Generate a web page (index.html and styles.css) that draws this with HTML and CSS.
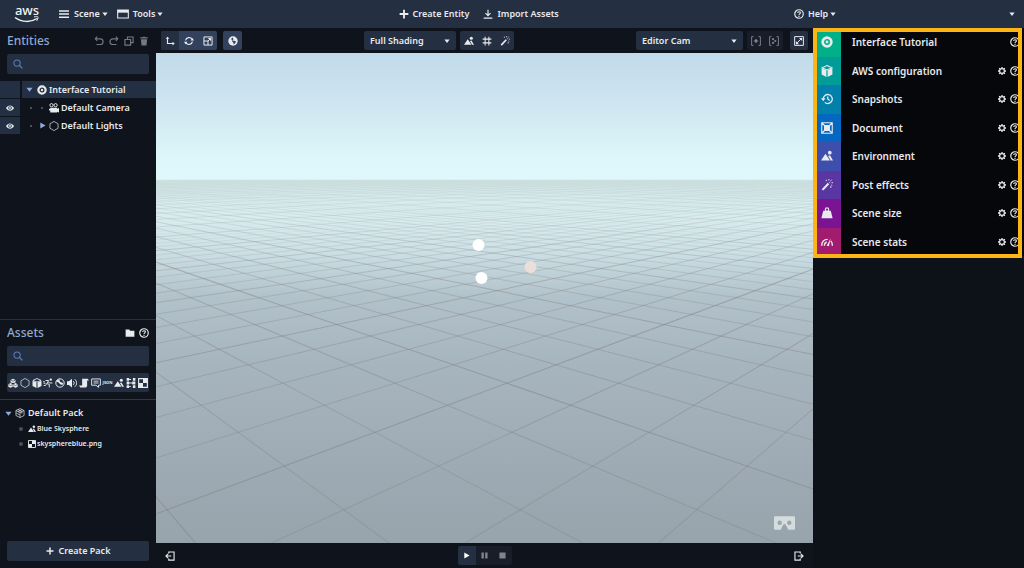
FILE: index.html
```html
<!DOCTYPE html>
<html lang="en">
<head>
    <meta charset="UTF-8">
    <meta name="viewport" content="width=device-width, initial-scale=1.0">
    <title>Scene Editor</title>
    <link rel="stylesheet" href="styles.css">
</head>
<body>
    <!-- Icon set -->
    <svg class="sprite" aria-hidden="true">
        <symbol id="i-menu" viewBox="0 0 16 16"><path d="M0 3h16M0 8h16M0 13h16" fill="none" stroke="currentColor" stroke-width="2.400"/></symbol>
        <symbol id="i-window" viewBox="0 0 18 14"><path d="M1 1h16v12H1z" fill="none" stroke="currentColor" stroke-width="1.600"/><path d="M1 1h16v4H1z"/></symbol>
        <symbol id="i-caret" viewBox="0 0 16 16"><path d="M1 4h14L8 13z"/></symbol>
        <symbol id="i-right" viewBox="0 0 16 16"><path d="M3 1v14l12-7z"/></symbol>
        <symbol id="i-plus" viewBox="0 0 16 16"><path d="M8 1v14M1 8h14" fill="none" stroke="currentColor" stroke-width="3"/></symbol>
        <symbol id="i-import" viewBox="0 0 16 16"><path d="M8 1v9M4 6.500l4 4 4-4M1 14.500h14" fill="none" stroke="currentColor" stroke-width="1.900"/></symbol>
        <symbol id="i-help" viewBox="0 0 16 16"><circle cx="8" cy="8" r="6.800" fill="none" stroke="currentColor" stroke-width="1.900"/><path d="M5.800 6.500c0-3 4.600-2.800 4.400-.2C10 7.800 8 7.800 8 9.700M8 10.800v1.800" fill="none" stroke="currentColor" stroke-width="1.700"/></symbol>
        <symbol id="i-undo" viewBox="0 0 16 16"><path d="M5 1L2 4.500 5 8M2 4.500h8a4.500 4.500 0 0 1 0 9H4" fill="none" stroke="currentColor" stroke-width="1.800"/></symbol>
        <symbol id="i-redo" viewBox="0 0 16 16"><path d="M11 1l3 3.500L11 8M14 4.500H6a4.500 4.500 0 0 0 0 9h6" fill="none" stroke="currentColor" stroke-width="1.800"/></symbol>
        <symbol id="i-copy" viewBox="0 0 16 16"><path d="M1.500 5.500h9v9h-9zM5.500 5V1.500h9v9H11" fill="none" stroke="currentColor" stroke-width="1.800"/></symbol>
        <symbol id="i-trash" viewBox="0 0 16 16"><path d="M2 2h4V1h4v1h4v2H2zM3 5h10l-1 10H4z"/></symbol>
        <symbol id="i-search" viewBox="0 0 16 16"><circle cx="6.500" cy="6.500" r="5" fill="none" stroke="currentColor" stroke-width="1.700"/><path d="M10 10l5 5" stroke="currentColor" stroke-width="2.200"/></symbol>
        <symbol id="i-target" viewBox="0 0 16 16"><circle cx="8" cy="8" r="5.800" fill="none" stroke="currentColor" stroke-width="3.600"/><circle cx="8" cy="8" r="1.900"/></symbol>
        <symbol id="i-eye" viewBox="0 0 16 16"><path d="M0 8c4-7 12-7 16 0-4 7-12 7-16 0z"/><circle cx="8" cy="8" r="3.600" fill="#232f42"/><circle cx="8" cy="8" r="1.800"/></symbol>
        <symbol id="i-camera" viewBox="0 0 16 16"><g fill="none" stroke="currentColor" stroke-width="1.500"><circle cx="4" cy="3.500" r="2.600"/><circle cx="10.500" cy="3.500" r="2.600"/></g><path d="M2 7.500h11v1.500l3-1v7l-3-1v1H2zM0 9h2v3H0z"/></symbol>
        <symbol id="i-hex" viewBox="0 0 16 16"><path d="M8 .700l6.500 3.700v7.200L8 15.300l-6.500-3.700V4.400z" fill="none" stroke="currentColor" stroke-width="1.100"/></symbol>
        <symbol id="i-axes" viewBox="0 0 16 16"><path d="M4 2v10h9" fill="none" stroke="currentColor" stroke-width="1.800"/><path d="M1 4.500L4 1l3 3.500zM12 9l3.500 3L12 15z"/></symbol>
        <symbol id="i-rotate" viewBox="0 0 16 16"><path d="M2.500 7A5.600 5.600 0 0 1 13 5.500M13.500 9A5.600 5.600 0 0 1 3 10.500" fill="none" stroke="currentColor" stroke-width="1.900"/><path d="M10.500 7H16l-2.500-4zM5.500 9H0l2.500 4z"/></symbol>
        <symbol id="i-scale" viewBox="0 0 16 16"><path d="M1.500 1.500h13v13h-13zM1.500 8H8v6.500M8 8l4-4M8.500 4H12v3.500" fill="none" stroke="currentColor" stroke-width="1.600"/></symbol>
        <symbol id="i-globe" viewBox="0 0 16 16"><circle cx="8" cy="8" r="7.500"/><path d="M8 2.500L5 4.500 6.500 7 10 7.500 13 9l-2 3-2.500 1.500L9 11 6.500 8.500 8.500 5.500z" fill="#32415c"/></symbol>
        <symbol id="i-terrain" viewBox="0 0 16 16"><path d="M0 14L6 5l6 9zM9.500 8L12 7l4 7h-3z"/><circle cx="11.700" cy="3.500" r="2.500"/></symbol>
        <symbol id="i-grid" viewBox="0 0 16 16"><path d="M5 1v14M11 1v14M1 5h14M1 11h14" fill="none" stroke="currentColor" stroke-width="1.700"/></symbol>
        <symbol id="i-wand" viewBox="0 0 16 16"><path d="M2 14.500L10 6" stroke="currentColor" stroke-width="2.700"/><path d="M7 1v2M10.500 0v2M14 1l-1 1.500M16 5h-2M15 8.500l-1.500-.5M13 12V9.500M11 5l1.500-1" stroke="currentColor" stroke-width="1.200"/></symbol>
        <symbol id="i-focus" viewBox="0 0 16 16"><path d="M4 1H1v14h3M12 1h3v14h-3M8 4.500v7M4.500 8h7" fill="none" stroke="currentColor" stroke-width="1.500"/><circle cx="8" cy="8" r="2.300"/></symbol>
        <symbol id="i-focus2" viewBox="0 0 16 16"><path d="M4 1H1v14h3M12 1h3v14h-3" fill="none" stroke="currentColor" stroke-width="1.500"/><circle cx="6.500" cy="5" r="1.700"/><circle cx="10" cy="8" r="1.700"/><circle cx="6.500" cy="11" r="1.700"/></symbol>
        <symbol id="i-expand" viewBox="0 0 16 16"><path d="M1 1h14v14H1zM5 11l6-6" fill="none" stroke="currentColor" stroke-width="1.600"/><path d="M8 3h5v5zM3 8v5h5z"/></symbol>
        <symbol id="i-folder" viewBox="0 0 16 16"><path d="M1 2.500h6l1 2h7V14H1z"/></symbol>
        <symbol id="i-models" viewBox="0 0 16 16"><path d="M8 1l4 2v4L8 8 4 7V3zM4 8l3.500 2v4L4 15.500.500 14v-4zM12 8l3.500 2v4L12 15.500 8.500 14v-4z"/><path d="M4.500 3.500L8 5l3.500-1.500M1 10.500L4 12l3-1.500M9 10.500l3 1.500 3-1.500" fill="none" stroke="#232f42"/></symbol>
        <symbol id="i-cube" viewBox="0 0 16 16"><path d="M8 .800L14.500 3.800 8 6.500 1.500 3.800z" fill="none" stroke="currentColor" stroke-width="1.400"/><path d="M.800 4.200L7.200 7v9L.800 12.800zM15.200 4.200L8.800 7v9l6.400-3.200z"/></symbol>
        <symbol id="i-run" viewBox="0 0 16 16"><circle cx="12.500" cy="2.500" r="1.900"/><path d="M4 4h5L6 9l4 1v5M8 6l3 2h4M6 9l-2 3H1M0 6h3M1 8.500h3" fill="none" stroke="currentColor" stroke-width="1.500"/></symbol>
        <symbol id="i-material" viewBox="0 0 16 16"><circle cx="8" cy="8" r="6.700" fill="none" stroke="currentColor" stroke-width="1.600"/><path d="M3 4l4-2 1 4 5 2-1 3-4-1-2-3-4-1z"/></symbol>
        <symbol id="i-sound" viewBox="0 0 16 16"><path d="M0 5h3l5-4v14l-5-4H0z"/><path d="M10 5c2 2 2 4 0 6M12.500 2c4 4 4 8 0 12" fill="none" stroke="currentColor" stroke-width="1.500"/></symbol>
        <symbol id="i-script" viewBox="0 0 16 16"><path d="M5 1h9l2 3h-3v9l-2 2H2l-2-3h5z"/></symbol>
        <symbol id="i-speech" viewBox="0 0 16 16"><path d="M1 1.500h14v10h-3V15l-4-3.500H1zM4 5h8M4 8h8" fill="none" stroke="currentColor" stroke-width="1.500"/></symbol>
        <symbol id="i-state" viewBox="0 0 16 16"><path d="M1 0h4v4.500H1zM1 5.700h4v4.500H1zM1 11.500h4V16H1zM11 0h4v4.500h-4zM10 5.700h5v4.500h-5zM11 11.500h4V16h-4zM5 1.500h3v1.500H5zM5 7.200h5v1.500H5zM5 13h3v1.500H5z"/></symbol>
        <symbol id="i-texture" viewBox="0 0 16 16"><path d="M1 1h14v14H1z" fill="none" stroke="currentColor" stroke-width="1.800"/><path d="M8 1h7v7H8zM1 8h7v7H1z"/></symbol>
        <symbol id="i-pack" viewBox="0 0 16 16"><path d="M8 1l6.500 3v8L8 15.300 1.500 12V4zM1.500 4L8 7.500 14.500 4M8 7.500V15M4.500 2.500L11 6v3M11.500 2.500L5 6M2 8l5.500 3" fill="none" stroke="currentColor" stroke-width="1.100"/></symbol>
        <symbol id="i-exit-left" viewBox="0 0 16 16"><path d="M6 4V1.500h8.500v13H6V12M1.500 8H10M5 4.500L1.500 8 5 11.500" fill="none" stroke="currentColor" stroke-width="1.800"/></symbol>
        <symbol id="i-exit-right" viewBox="0 0 16 16"><path d="M10 4V1.500H1.500v13H10V12M6 8h8.500M11 4.500L14.500 8 11 11.500" fill="none" stroke="currentColor" stroke-width="1.800"/></symbol>
        <symbol id="i-pause" viewBox="0 0 16 16"><path d="M1 1h5.500v14H1zM9.500 1H15v14H9.500z"/></symbol>
        <symbol id="i-stop" viewBox="0 0 16 16"><path d="M1 1h14v14H1z"/></symbol>
        <symbol id="i-gear" viewBox="0 0 16 16"><circle cx="8" cy="8" r="4.800" fill="none" stroke="currentColor" stroke-width="2.400"/><path d="M8 0v3M8 13v3M0 8h3M13 8h3M2.300 2.300l2 2M11.700 11.700l2 2M2.300 13.700l2-2M11.700 4.300l2-2" stroke="currentColor" stroke-width="2.600"/></symbol>
        <symbol id="i-history" viewBox="0 0 16 16"><path d="M3 8a6 6 0 1 1 2 4.500M9 4.500V8l2.500 2" fill="none" stroke="currentColor" stroke-width="1.700"/><path d="M0 7h6l-3 4z"/></symbol>
        <symbol id="i-document" viewBox="0 0 16 16"><path d="M1 1h14v14H1zM1 1l4 4M15 1l-4 4M1 15l4-4M15 15l-4-4" fill="none" stroke="currentColor" stroke-width="1.500"/><path d="M4 4h8v8H4z"/></symbol>
        <symbol id="i-weight" viewBox="0 0 16 16"><path d="M3 5h10l2.500 10H.500z"/><circle cx="8" cy="3.500" r="2.300" fill="none" stroke="currentColor" stroke-width="1.500"/></symbol>
        <symbol id="i-gauge" viewBox="0 0 16 16"><path d="M1 13c0-5 3-8.500 8-8.500M13 6.500c1.500 1.500 2.200 3.500 2.200 6.500M4.500 13c0-2.500 1.200-4.300 3-5" fill="none" stroke="currentColor" stroke-width="1.800"/><path d="M7.500 13L13 3l-2.500 10.500z"/></symbol>
        <symbol id="i-vr" viewBox="0 0 22 14"><path fill-rule="evenodd" d="M1 0h20q1 0 1 1v12q0 1-1 1h-6l-2.500-5q-1.500-2-3 0L7 14H1q-1 0-1-1V1q0-1 1-1zM6 4.500a2.300 2.300 0 1 0 .01 0zM16 4.500a2.300 2.300 0 1 0 .01 0z"/></symbol>
    </svg>

    <header class="topbar">
        <nav class="menu">
            <a class="logo" href="#" aria-label="aws">
                <svg viewBox="0 0 26 28">
                    <text x="13" y="15" text-anchor="middle">aws</text>
                    <path d="M1 17.500c7 5 16 5 22 1" fill="none" stroke="currentColor" stroke-width="1.500"/>
                    <path d="M20 17c3-.8 4.500-.5 4 1s-1 2.500-1.500 3" fill="none" stroke="currentColor"/>
                </svg>
            </a>
            <button type="button" class="menu-btn"><svg class="icon wide"><use href="#i-menu"/></svg>Scene<svg class="icon caret"><use href="#i-caret"/></svg></button>
            <button type="button" class="menu-btn"><svg class="icon wide"><use href="#i-window"/></svg>Tools<svg class="icon caret"><use href="#i-caret"/></svg></button>
        </nav>
        <div class="menu actions">
            <button type="button" class="menu-btn"><svg class="icon"><use href="#i-plus"/></svg>Create Entity</button>
            <button type="button" class="menu-btn"><svg class="icon"><use href="#i-import"/></svg>Import Assets</button>
        </div>
        <div class="menu account">
            <button type="button" class="menu-btn"><svg class="icon"><use href="#i-help"/></svg>Help<svg class="icon caret"><use href="#i-caret"/></svg></button>
            <button type="button" class="menu-btn" aria-label="Account"><svg class="icon caret"><use href="#i-caret"/></svg></button>
        </div>
    </header>

    <main class="editor">
        <aside class="sidebar">
            <section class="entities">
                <div class="panel-head">
                    <h2>Entities</h2>
                    <div class="panel-tools dim">
                        <button type="button" aria-label="Undo"><svg class="icon"><use href="#i-undo"/></svg></button>
                        <button type="button" aria-label="Redo"><svg class="icon"><use href="#i-redo"/></svg></button>
                        <button type="button" aria-label="Duplicate"><svg class="icon"><use href="#i-copy"/></svg></button>
                        <button type="button" aria-label="Delete"><svg class="icon"><use href="#i-trash"/></svg></button>
                    </div>
                </div>
                <label class="search"><svg class="icon"><use href="#i-search"/></svg><input type="search" aria-label="Search entities"></label>
                <ul class="tree">
                    <li class="selected"><span class="eye"></span><div class="node"><svg class="icon arrow"><use href="#i-caret"/></svg><svg class="icon"><use href="#i-target"/></svg>Interface Tutorial</div></li>
                    <li><button type="button" class="eye" aria-label="Toggle camera"><svg class="icon"><use href="#i-eye"/></svg></button><div class="node child"><i class="dot"></i><span class="slot"><i class="dot"></i></span><svg class="icon"><use href="#i-camera"/></svg>Default Camera</div></li>
                    <li><button type="button" class="eye" aria-label="Toggle lights"><svg class="icon"><use href="#i-eye"/></svg></button><div class="node child"><i class="dot"></i><span class="slot"><svg class="icon arrow"><use href="#i-right"/></svg></span><svg class="icon"><use href="#i-hex"/></svg>Default Lights</div></li>
                </ul>
            </section>
            <section class="assets">
                <div class="panel-head">
                    <h2>Assets</h2>
                    <div class="panel-tools">
                        <button type="button" aria-label="New folder"><svg class="icon"><use href="#i-folder"/></svg></button>
                        <button type="button" aria-label="Help"><svg class="icon"><use href="#i-help"/></svg></button>
                    </div>
                </div>
                <label class="search"><svg class="icon"><use href="#i-search"/></svg><input type="search" aria-label="Search assets"></label>
                <div class="filters">
                    <button type="button" aria-label="Models"><svg class="icon"><use href="#i-models"/></svg></button>
                    <button type="button" aria-label="Entities"><svg class="icon"><use href="#i-hex"/></svg></button>
                    <button type="button" aria-label="Meshes"><svg class="icon"><use href="#i-cube"/></svg></button>
                    <button type="button" aria-label="Animations"><svg class="icon"><use href="#i-run"/></svg></button>
                    <button type="button" aria-label="Materials"><svg class="icon"><use href="#i-material"/></svg></button>
                    <button type="button" aria-label="Sounds"><svg class="icon"><use href="#i-sound"/></svg></button>
                    <button type="button" aria-label="Scripts"><svg class="icon"><use href="#i-script"/></svg></button>
                    <button type="button" aria-label="Speech"><svg class="icon"><use href="#i-speech"/></svg></button>
                    <button type="button" class="json">JSON</button>
                    <button type="button" aria-label="Skyboxes"><svg class="icon"><use href="#i-terrain"/></svg></button>
                    <button type="button" aria-label="State machines"><svg class="icon"><use href="#i-state"/></svg></button>
                    <button type="button" aria-label="Textures"><svg class="icon"><use href="#i-texture"/></svg></button>
                </div>
                <ul class="packs">
                    <li class="pack"><svg class="icon arrow"><use href="#i-caret"/></svg><svg class="icon"><use href="#i-pack"/></svg>Default Pack</li>
                    <li class="asset"><i class="bullet"></i><svg class="icon"><use href="#i-terrain"/></svg>Blue Skysphere</li>
                    <li class="asset"><i class="bullet"></i><svg class="icon"><use href="#i-texture"/></svg>skysphereblue.png</li>
                </ul>
                <button type="button" class="create-pack"><svg class="icon"><use href="#i-plus"/></svg>Create Pack</button>
            </section>
        </aside>

        <section class="stage">
            <div class="toolbar">
                <div class="tools left">
                    <div class="group lit">
                        <button type="button" class="active" aria-label="Translate"><svg class="icon"><use href="#i-axes"/></svg></button>
                        <button type="button" aria-label="Rotate"><svg class="icon"><use href="#i-rotate"/></svg></button>
                        <button type="button" aria-label="Scale"><svg class="icon"><use href="#i-scale"/></svg></button>
                    </div>
                    <div class="group lit"><button type="button" aria-label="World space"><svg class="icon"><use href="#i-globe"/></svg></button></div>
                </div>
                <div class="tools">
                    <div class="select shading"><select aria-label="Shading"><option>Full Shading</option></select><svg class="icon caret"><use href="#i-caret"/></svg></div>
                    <div class="group">
                        <button type="button" aria-label="Skybox"><svg class="icon"><use href="#i-terrain"/></svg></button>
                        <button type="button" aria-label="Grid"><svg class="icon"><use href="#i-grid"/></svg></button>
                        <button type="button" aria-label="Post effects"><svg class="icon"><use href="#i-wand"/></svg></button>
                    </div>
                </div>
                <div class="tools">
                    <div class="select cam"><select aria-label="Camera"><option>Editor Cam</option></select><svg class="icon caret"><use href="#i-caret"/></svg></div>
                    <div class="group off">
                        <button type="button" aria-label="Focus"><svg class="icon"><use href="#i-focus"/></svg></button>
                        <button type="button" aria-label="Focus selection"><svg class="icon"><use href="#i-focus2"/></svg></button>
                    </div>
                    <div class="group last"><button type="button" aria-label="Maximize"><svg class="icon"><use href="#i-expand"/></svg></button></div>
                </div>
            </div>
            <div class="viewport">
                <svg class="scene" viewBox="0 0 656 490" preserveAspectRatio="xMidYMid slice">
                    <defs>
                        <linearGradient id="sky" x1="0" y1="0" x2="0" y2="1">
                            <stop offset="0" stop-color="#c1daea"/>
                            <stop offset=".5" stop-color="#d2e9f2"/>
                            <stop offset=".8" stop-color="#dcf6f9"/>
                            <stop offset="1" stop-color="#e0f8fb"/>
                        </linearGradient>
                        <linearGradient id="ground" x1="0" y1="0" x2="0" y2="1">
                            <stop offset="0" stop-color="#d2e8e7"/>
                            <stop offset=".06" stop-color="#daf0f2"/>
                            <stop offset=".12" stop-color="#d8ecef"/>
                            <stop offset=".2" stop-color="#cbdfe4"/>
                            <stop offset=".32" stop-color="#b2c2ca"/>
                            <stop offset=".5" stop-color="#a7b5be"/>
                            <stop offset=".8" stop-color="#9eaab3"/>
                            <stop offset="1" stop-color="#98a4ac"/>
                        </linearGradient>
                        <linearGradient id="haze" x1="0" y1="0" x2="0" y2="1">
                            <stop offset="0" stop-color="#1c1c1c"/>
                            <stop offset=".05" stop-color="#666"/>
                            <stop offset=".2" stop-color="#ddd"/>
                            <stop offset=".4" stop-color="#fff"/>
                            <stop offset="1" stop-color="#ccc"/>
                        </linearGradient>
                        <mask id="floor" maskUnits="userSpaceOnUse" x="0" y="0" width="656" height="490"><path d="M0 127h656v363H0z" fill="url(#haze)"/></mask>
                    </defs>
                    <path d="M0 0h656v128H0z" fill="url(#sky)"/>
                    <path d="M0 127h656v363H0z" fill="url(#ground)"/>
                    <g id="grid" mask="url(#floor)"></g>
                    <circle cx="322" cy="192" r="6" fill="#fff"/>
                    <circle cx="325" cy="225" r="6" fill="#fff"/>
                    <circle cx="374" cy="214" r="6" fill="#ecdfd9"/>
                </svg>
                <button type="button" class="vr" aria-label="View in VR"><svg><use href="#i-vr"/></svg></button>
            </div>
            <div class="playbar">
                <button type="button" aria-label="Hide left panel"><svg class="icon"><use href="#i-exit-left"/></svg></button>
                <div class="group off">
                    <button type="button" class="play" aria-label="Play"><svg class="icon"><use href="#i-right"/></svg></button>
                    <button type="button" aria-label="Pause"><svg class="icon"><use href="#i-pause"/></svg></button>
                    <button type="button" aria-label="Stop"><svg class="icon"><use href="#i-stop"/></svg></button>
                </div>
                <button type="button" aria-label="Hide right panel"><svg class="icon"><use href="#i-exit-right"/></svg></button>
            </div>
        </section>

        <aside class="inspector">
            <ul class="components">
                <li><span class="tile green"><svg class="icon"><use href="#i-target"/></svg></span><span class="name">Interface Tutorial</span><button type="button" aria-label="Help"><svg class="icon"><use href="#i-help"/></svg></button></li>
                <li><span class="tile teal"><svg class="icon"><use href="#i-cube"/></svg></span><span class="name">AWS configuration</span><button type="button" aria-label="Settings"><svg class="icon gear"><use href="#i-gear"/></svg></button><button type="button" aria-label="Help"><svg class="icon"><use href="#i-help"/></svg></button></li>
                <li><span class="tile cyan"><svg class="icon"><use href="#i-history"/></svg></span><span class="name">Snapshots</span><button type="button" aria-label="Settings"><svg class="icon gear"><use href="#i-gear"/></svg></button><button type="button" aria-label="Help"><svg class="icon"><use href="#i-help"/></svg></button></li>
                <li><span class="tile blue"><svg class="icon"><use href="#i-document"/></svg></span><span class="name">Document</span><button type="button" aria-label="Settings"><svg class="icon gear"><use href="#i-gear"/></svg></button><button type="button" aria-label="Help"><svg class="icon"><use href="#i-help"/></svg></button></li>
                <li><span class="tile indigo"><svg class="icon"><use href="#i-terrain"/></svg></span><span class="name">Environment</span><button type="button" aria-label="Settings"><svg class="icon gear"><use href="#i-gear"/></svg></button><button type="button" aria-label="Help"><svg class="icon"><use href="#i-help"/></svg></button></li>
                <li><span class="tile violet"><svg class="icon"><use href="#i-wand"/></svg></span><span class="name">Post effects</span><button type="button" aria-label="Settings"><svg class="icon gear"><use href="#i-gear"/></svg></button><button type="button" aria-label="Help"><svg class="icon"><use href="#i-help"/></svg></button></li>
                <li><span class="tile purple"><svg class="icon"><use href="#i-weight"/></svg></span><span class="name">Scene size</span><button type="button" aria-label="Settings"><svg class="icon gear"><use href="#i-gear"/></svg></button><button type="button" aria-label="Help"><svg class="icon"><use href="#i-help"/></svg></button></li>
                <li><span class="tile magenta"><svg class="icon"><use href="#i-gauge"/></svg></span><span class="name">Scene stats</span><button type="button" aria-label="Settings"><svg class="icon gear"><use href="#i-gear"/></svg></button><button type="button" aria-label="Help"><svg class="icon"><use href="#i-help"/></svg></button></li>
            </ul>
        </aside>
    </main>

    <script>
        // Floor grid: both line families drawn in perspective, near depth to far depth
        const NS = 'http://www.w3.org/2000/svg';
        const grid = document.getElementById('grid');
        const center = 327, horizon = 111.5, height = 2387, half = 610, shift = 254, start = 6.92;
        const near = 5, far = 160;

        function addLine(side, n) {
            const k = side * (half * (2 * n + start)) - shift;
            // side 1 leans right towards its vanishing point, side -1 leans left
            const vanish = center + side * half;
            const line = document.createElementNS(NS, 'line');
            line.setAttribute('x1', vanish - k / near);
            line.setAttribute('y1', horizon + height / near);
            line.setAttribute('x2', vanish - k / far);
            line.setAttribute('y2', horizon + height / far);
            const major = (n - 2) % 4 === 0;
            const fade = Math.max(0.1, 1 - n / 30);
            line.setAttribute('class', major ? 'major' : 'minor');
            line.setAttribute('opacity', Math.min(1, major ? Math.max(fade, 0.6) : fade));
            grid.appendChild(line);
        }

        for (let n = -6; n <= 110; n++) {
            addLine(1, n);
            addLine(-1, n);
        }
    </script>
</body>
</html>
```

FILE: styles.css
```css
* {
    box-sizing: border-box;
}

body {
    margin: 0;
    height: 100vh;
    display: flex;
    flex-direction: column;
    background: #0f131b;
    color: #e8eaed;
    font-family: "Noto Sans", "Open Sans", sans-serif;
    font-size: 9px;
    font-weight: 600;
    line-height: 12px;
    overflow: hidden;
}

button {
    display: flex;
    align-items: center;
    justify-content: center;
    padding: 0;
    border: none;
    background: none;
    color: inherit;
    font: inherit;
    cursor: pointer;
}

ul {
    margin: 0;
    padding: 0;
    list-style: none;
}

.sprite {
    display: none;
}

.icon {
    width: 10px;
    height: 10px;
    flex: none;
    fill: currentColor;
}

.caret {
    width: 6px;
    height: 6px;
}

.arrow {
    width: 7px;
    height: 7px;
    color: #8fabdc;
}

/* Top bar */
.topbar {
    flex: none;
    height: 28px;
    padding: 0 9px 0 14px;
    display: flex;
    align-items: center;
    justify-content: space-between;
    background: #242f41;
}

.menu {
    display: flex;
    align-items: center;
    gap: 9px;
}

.menu-btn {
    gap: 4px;
}

.menu-btn .caret {
    margin-left: -2px;
}

.wide {
    width: 12px;
}

.actions {
    gap: 14px;
}

.account {
    width: 221px;
    justify-content: space-between;
}

.logo {
    margin-right: 9px;
    color: #f2f3f5;
}

.logo svg {
    display: block;
    width: 26px;
    height: 28px;
}

.logo text {
    fill: currentColor;
    font-size: 13px;
    font-weight: 500;
}

.editor {
    flex: 1;
    min-height: 0;
    display: grid;
    grid-template-columns: 156px 1fr 211px;
}

/* Left side */
.sidebar {
    min-height: 0;
    display: flex;
    flex-direction: column;
}

.entities {
    flex: 1;
    border-bottom: 1px solid #253145;
}

.assets {
    height: 248px;
    display: flex;
    flex-direction: column;
}

.panel-head {
    height: 26px;
    padding: 0 7px;
    display: flex;
    align-items: center;
    justify-content: space-between;
}

.panel-head h2 {
    margin: 0;
    color: #8fa9cf;
    font-size: 12px;
    font-weight: 500;
    line-height: 16px;
}

.panel-tools {
    display: flex;
    gap: 4px;
}

.dim {
    gap: 5px;
    color: #747981;
}

.search {
    height: 20px;
    margin: 0 7px;
    padding: 0 6px;
    display: flex;
    align-items: center;
    gap: 4px;
    border-radius: 2px;
    background: #242f41;
    color: #5a7bb5;
}

.search input {
    flex: 1;
    min-width: 0;
    padding: 0;
    border: none;
    outline: none;
    background: none;
    color: #e8eaed;
    font: inherit;
}

.tree {
    margin-top: 7px;
}

.tree li {
    display: flex;
    gap: 2px;
    height: 18px;
    padding-bottom: 1px;
}

.eye {
    width: 20px;
    background: #232f42;
}

.eye .icon {
    width: 8px;
    height: 8px;
}

.node {
    flex: 1;
    padding-left: 4px;
    display: flex;
    align-items: center;
    gap: 2px;
}

.selected .node {
    background: #232f42;
}

.selected .arrow {
    margin-right: 2px;
}

.child {
    padding-left: 8px;
}

.dot {
    width: 2px;
    height: 2px;
    background: #4a4f58;
}

.slot {
    width: 13px;
    display: flex;
    justify-content: flex-end;
    padding-right: 1px;
}

.slot .dot {
    margin-right: 3px;
}

.filters {
    height: 19px;
    margin: 7px;
    display: grid;
    grid-template-columns: repeat(12, 1fr);
    border-radius: 2px;
    background: #242f41;
}

.json {
    font-size: 4px;
    font-weight: 700;
}

.packs {
    flex: 1;
    padding-top: 5px;
    border-top: 1px solid #253a55;
}

.pack,
.asset {
    display: flex;
    align-items: center;
    gap: 3px;
}

.pack {
    height: 16px;
    padding-left: 5px;
}

.asset {
    height: 15px;
    padding-left: 19px;
    gap: 1px;
    font-size: 7px;
}

.asset .icon {
    width: 8px;
    height: 8px;
}

.bullet {
    width: 4px;
    height: 4px;
    margin-right: 4px;
    border-radius: 50%;
    background: #4a4f58;
}

.create-pack {
    height: 20px;
    margin: 0 7px 7px;
    gap: 5px;
    border-radius: 2px;
    background: #242f41;
}

.create-pack .icon {
    width: 8px;
    height: 8px;
}

/* Centre */
.stage {
    min-width: 0;
    min-height: 0;
    display: flex;
    flex-direction: column;
}

.toolbar,
.playbar {
    flex: none;
    height: 25px;
    padding: 0 5px;
    display: flex;
    align-items: center;
    justify-content: space-between;
}

.tools {
    display: flex;
    gap: 4px;
}

.left {
    gap: 6px;
}

.group {
    height: 19px;
    display: flex;
    border-radius: 2px;
    background: #242f41;
    overflow: hidden;
}

.group button {
    width: 18px;
}

.lit {
    background: #32415c;
}

.lit button {
    width: 19px;
}

.lit .active,
.play {
    width: 18px;
    background: #242f41;
}

.off {
    background: #171d29;
    color: #80848b;
}

.play {
    color: #fff;
}

.playbar .group .icon {
    width: 7px;
    height: 7px;
}

.last {
    margin-left: 3px;
}

.select {
    position: relative;
    height: 19px;
    border-radius: 2px;
    background: #242f41;
}

.select select {
    width: 100%;
    height: 100%;
    padding: 0 6px;
    appearance: none;
    border: none;
    background: none;
    color: inherit;
    font: inherit;
}

.select .caret {
    position: absolute;
    top: 7px;
    right: 6px;
    pointer-events: none;
}

.shading {
    width: 92px;
}

.cam {
    width: 107px;
}

.viewport {
    flex: 1;
    min-height: 0;
    position: relative;
}

.scene {
    display: block;
    width: 100%;
    height: 100%;
}

.major,
.minor {
    stroke: #7b7276;
    stroke-width: 1;
}

.major {
    stroke-opacity: .46;
}

.minor {
    stroke-opacity: .34;
}

.vr {
    position: absolute;
    right: 18px;
    bottom: 13px;
}

.vr svg {
    width: 21px;
    height: 14px;
    fill: #d5dcde;
}

.playbar > button {
    width: 18px;
    height: 19px;
}

/* Right side */
.inspector {
    background: #0d1118;
}

.components {
    position: relative;
    height: 228px;
    display: grid;
    grid-template-rows: repeat(8, 1fr);
    background: #06070b;
}

/* highlight frame around the component list */
.components::after {
    content: "";
    position: absolute;
    inset: 0 2px -2px 0;
    border: 4px solid #fdb515;
    pointer-events: none;
}

.components li {
    display: flex;
    align-items: center;
    gap: 4px;
    padding-right: 4px;
}

.tile {
    width: 28px;
    align-self: stretch;
    display: flex;
    align-items: center;
    justify-content: center;
}

.tile .icon {
    width: 12px;
    height: 12px;
}

.name {
    flex: 1;
    padding-left: 7px;
    font-size: 10px;
}

.gear {
    width: 8px;
    height: 8px;
}

.green { background: #01b088; }
.teal { background: #029c98; }
.cyan { background: #0280ac; }
.blue { background: #0467c0; }
.indigo { background: #3d4eac; }
.violet { background: #5a36a2; }
.purple { background: #7b1493; }
.magenta { background: #a11c6f; }
```
